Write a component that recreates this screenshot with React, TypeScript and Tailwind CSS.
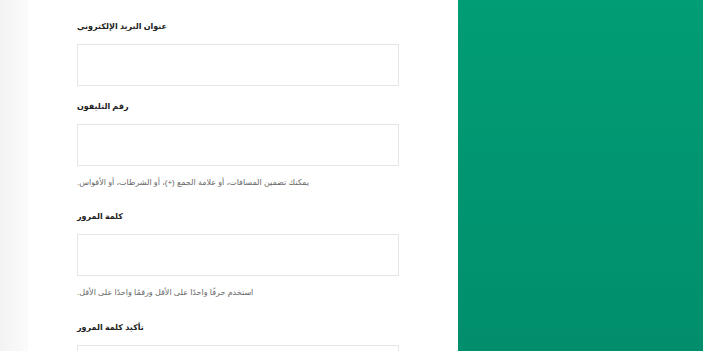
import React from 'react';

const font = { fontFamily: '"Liberation Sans", "DejaVu Sans", Arial, sans-serif' };

function Field({ label, hint, first }: { label: string; hint?: string; first?: boolean }) {
  return (
    <div className={first ? 'pt-[20px]' : ''}>
      <label dir="rtl" className="block text-left text-[8px] leading-[14px] font-bold text-[#222]">
        {label}
      </label>
      <div className="mt-[10px] h-[42px] w-[322px] border border-[#e6e6e6] bg-white" />
      {hint && (
        <p dir="rtl" className="mt-[10px] text-left text-[8px] leading-[14px] text-[#666]">
          {hint}
        </p>
      )}
    </div>
  );
}

export default function App() {
  return (
    <div className="flex h-[351px] w-[703px] overflow-hidden bg-white" style={font}>
      <div className="w-[28px] shrink-0 bg-gradient-to-r from-[#f3f3f3] to-[#fbfbfb]" />
      <div className="w-[430px] shrink-0 bg-white pl-[49px]">
        <Field first label="عنوان البريد الإلكتروني" />
        <div className="mt-[14px]">
          <Field
            label="رقم التليفون"
            hint="يمكنك تضمين المسافات، أو علامة الجمع (+)، أو الشرطات، أو الأقواس."
          />
        </div>
        <div className="mt-[20px]">
          <Field label="كلمة المرور" hint="استخدم حرفًا واحدًا على الأقل ورقمًا واحدًا على الأقل." />
        </div>
        <div className="mt-[21px]">
          <Field label="تأكيد كلمة المرور" />
        </div>
      </div>
      <div className="flex-1 bg-gradient-to-b from-[#019d74] to-[#018e6d]" />
    </div>
  );
}
